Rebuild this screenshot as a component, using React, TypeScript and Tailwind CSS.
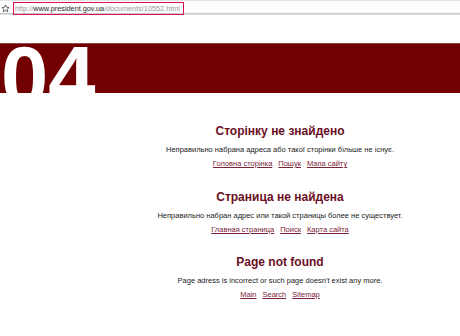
const sections = [
  {
    title: 'Сторінку не знайдено',
    text: 'Неправильно набрана адреса або такої сторінки більше не існує.',
    links: ['Головна сторінка', 'Пошук', 'Мапа сайту'],
  },
  {
    title: 'Страница не найдена',
    text: 'Неправильно набран адрес или такой страницы более не существует.',
    links: ['Главная страница', 'Поиск', 'Карта сайта'],
  },
  {
    title: 'Page not found',
    text: "Page adress is incorrect or such page doesn't exist any more.",
    links: ['Main', 'Search', 'Sitemap'],
  },
]

function Star() {
  return (
    <svg width="9" height="9" viewBox="0 0 24 24" fill="none" stroke="#555" strokeWidth="2.4" strokeLinejoin="round">
      <path d="M12 2.5l2.9 6.2 6.6.7-5 4.5 1.4 6.6L12 17.1l-5.9 3.4 1.4-6.6-5-4.5 6.6-.7z" />
    </svg>
  )
}

export default function App() {
  return (
    <div className="h-[336px] w-[460px] overflow-hidden bg-white font-['Liberation_Sans',Arial,sans-serif]">
      {/* address bar */}
      <div className="flex h-[13px] items-start border-t border-[#e4e4e4] bg-[#fdfdfd]">
        <div className="ml-[1px] mt-[3px] flex h-[9px] w-[9px] items-center justify-center">
          <Star />
        </div>
        <div className="relative z-10 ml-[3px] mt-[1px] flex h-[13px] w-[171px] items-center whitespace-nowrap border-[1.5px] border-[#dc1250] pl-[1px] text-[7.3px] leading-none">
          <span className="text-[#9a9a9a]">http://</span>
          <span className="text-[#2a2a2a]">www.president.gov.ua</span>
          <span className="text-[#9a9a9a]">/documents/10552.html</span>
        </div>
      </div>
      <div className="h-[2px] border-t border-[#c9c9c9] bg-[#d6e0e6]" />

      {/* banner */}
      <div className="mt-[28px] h-[50px] border-t border-[#8a4a4a] bg-[#720000]">
        <div className="-mt-[10px] ml-[1px] text-[85px] font-bold leading-none text-white">04</div>
      </div>

      {/* messages */}
      <div className="relative ml-[100px] mt-[31px] flex w-[360px] flex-col gap-[21.5px] text-center">
        {sections.map((s) => (
          <div key={s.title} className="flex flex-col">
            <h1 className="text-[12px] font-bold leading-[14px] text-[#6b0f1f]">{s.title}</h1>
            <p className="mt-[7px] text-[7.5px] leading-[9px] text-[#222]">{s.text}</p>
            <div className="mt-[5px] flex justify-center gap-[6px] text-[7.5px] leading-[9px]">
              {s.links.map((l) => (
                <a key={l} href="#" className="text-[#7a2436] underline">
                  {l}
                </a>
              ))}
            </div>
          </div>
        ))}
      </div>
    </div>
  )
}
